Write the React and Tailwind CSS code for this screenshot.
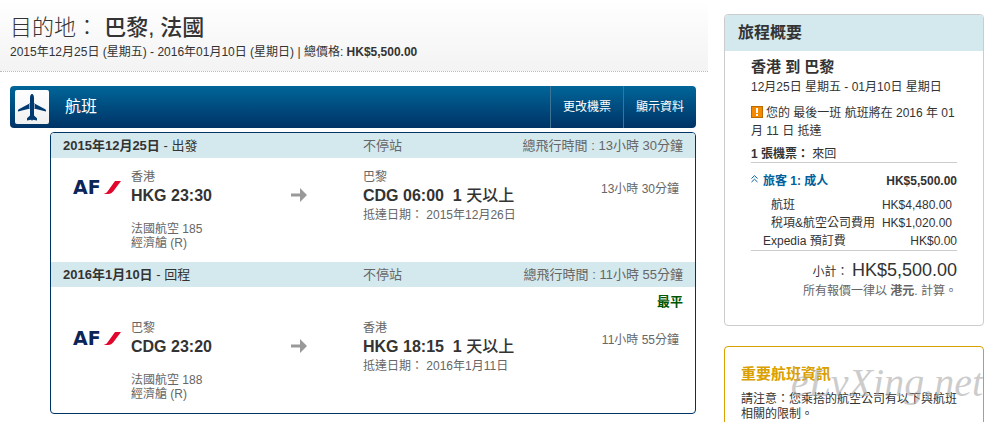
import { useState } from 'react'

const voos = [
    {
        data: '2015年12月25日',
        sentido: '出發',
        duracao: '13小時 30分鐘',
        origem: '香港',
        partida: 'HKG 23:30',
        destino: '巴黎',
        chegada: 'CDG 06:00',
        dataChegada: '2015年12月26日',
        voo: '法國航空 185',
        classe: '經濟艙 (R)',
        maisBarato: false
    },
    {
        data: '2016年1月10日',
        sentido: '回程',
        duracao: '11小時 55分鐘',
        origem: '巴黎',
        partida: 'CDG 23:20',
        destino: '香港',
        chegada: 'HKG 18:15',
        dataChegada: '2016年1月11日',
        voo: '法國航空 188',
        classe: '經濟艙 (R)',
        maisBarato: true
    }
]

function LogoAF() {
    return (
        <div className="flex w-12 h-[14px] items-center justify-between font-['DejaVu_Sans',sans-serif] text-[19px] leading-[14px] font-bold text-[#0b2559]">
            <span>AF</span>
            <svg viewBox="0 0 18 13" className="w-[18px] h-[13px]" aria-hidden="true">
                <path fill="#e2062c" d="M12 0 H18 L10.500 10 C9 12 7.500 13 5 13 H0.500 C2.500 12.600 3.500 11.800 4.500 10.500 Z" />
            </svg>
        </div>
    )
}

function Aviao() {
    return (
        <svg viewBox="0 0 34 34" className="w-[34px] h-[34px]" aria-hidden="true">
            <path
                fill="#003a70"
                d="M17 4 C18.300 4 19 5.800 19 8 V13.200 L30.200 19.200 C31 19.700 31.200 20.500 31 21.600 L19 18.500 V25.600 L22 28.200 V30.600 L17.800 29.800 L17 31 L16.200 29.800 L12 30.600 V28.200 L15 25.600 V18.500 L3 21.600 C2.800 20.500 3 19.700 3.800 19.200 L15 13.200 V8 C15 5.800 15.700 4 17 4 Z"
            />
            <path fill="none" stroke="#8fa9c4" d="M14.500 13.500 V18.500 M19.500 13.500 V18.500" />
        </svg>
    )
}

function Seta() {
    return (
        <svg viewBox="0 0 16 14" className="w-4 h-[14px]" aria-hidden="true">
            <path fill="#999999" d="M0 5.500 H9 V0 L16 7 L9 14 V8.500 H0 Z" />
        </svg>
    )
}

function Trecho({ voo }) {
    return (
        <section>
            <div className="grid grid-cols-[300px_1fr_auto] h-[25px] items-center px-3 bg-[#d4e9ed] text-[13px] text-[#666666]">
                <h3 className="text-[#333333]">
                    <b>{voo.data}</b> - {voo.sentido}
                </h3>
                <span>不停站</span>
                <span>總飛行時間 : {voo.duracao}</span>
            </div>

            {voo.maisBarato && (
                <p className="pt-[7px] px-3 text-right text-[13px] leading-[15px] font-bold text-[#005500]">最平</p>
            )}

            <div className="grid grid-cols-[58px_160px_72px_1fr_auto] pl-[22px] pr-4 py-3 text-xs leading-[14px] text-[#666666]">
                <div className="pt-2.5">
                    <LogoAF />
                </div>
                <div>
                    <p>{voo.origem}</p>
                    <p className="text-base leading-6 font-bold text-[#333333]">{voo.partida}</p>
                    <p className="mt-[14px]">{voo.voo}</p>
                    <p>{voo.classe}</p>
                </div>
                <div className="pt-[18px]">
                    <Seta />
                </div>
                <div>
                    <p>{voo.destino}</p>
                    <p className="text-base leading-6 font-bold text-[#333333]">
                        {voo.chegada}&nbsp; 1 <span className="font-medium">天以上</span>
                    </p>
                    <p>抵達日期： {voo.dataChegada}</p>
                </div>
                <p className="pt-3">{voo.duracao}</p>
            </div>
        </section>
    )
}

function Resumo() {
    const [aberto, setAberto] = useState(true)

    return (
        <section className="border border-[#cccccc] rounded-[4px] pb-[25px] overflow-hidden">
            <h2 className="h-9 px-[13px] bg-[#d4e9ed] text-base leading-9 font-bold">旅程概要</h2>

            <div className="px-[26px] pt-1.5 text-xs leading-[18px]">
                <h3 className="mb-px text-[15px] leading-5 font-bold">香港 到 巴黎</h3>
                <p>12月25日 星期五 - 01月10日 星期日</p>

                <p className="mt-2">
                    <svg viewBox="0 0 12 12" className="inline-block w-3 h-3 mr-[3px] align-[-1px]" aria-hidden="true">
                        <rect x="0.5" y="0.5" width="11" height="11" fill="#f58a00" stroke="#b96a00" />
                        <path fill="#ffffff" d="M5 2 H7 V7 H5 Z M5 8 H7 V10 H5 Z" />
                    </svg>
                    您的 最後一班 航班將在 2016 年 01 月 11 日 抵達
                </p>

                <p className="mt-1.5 border-b border-[#cccccc] leading-4">
                    <b>1 張機票：</b> 來回
                </p>

                {/* Valores por passageiro */}
                <div className="mt-[9px] flex justify-between font-bold">
                    <button
                        type="button"
                        aria-expanded={aberto}
                        onClick={() => setAberto(!aberto)}
                        className="flex gap-[5px] text-[#00609c] cursor-pointer"
                    >
                        <svg viewBox="0 0 7 8" className="w-[7px] h-2 mt-[3px]" fill="none" stroke="currentColor" aria-hidden="true">
                            <path d="M0.500 3.500 L3.500 0.700 L6.500 3.500 M0.500 7 L3.500 4.200 L6.500 7" />
                        </svg>
                        旅客 1: 成人
                    </button>
                    <span>HK$5,500.00</span>
                </div>

                <table className="w-full mt-1.5 border-b border-[#cccccc]">
                    <tbody>
                        {aberto && (
                            <>
                                <tr>
                                    <th scope="row" className="p-0 pl-5 text-left font-normal">航班</th>
                                    <td className="p-0 pr-[5px] text-right">HK$4,480.00</td>
                                </tr>
                                <tr>
                                    <th scope="row" className="p-0 pl-5 text-left font-normal whitespace-nowrap">稅項&amp;航空公司費用</th>
                                    <td className="p-0 pr-[5px] text-right">HK$1,020.00</td>
                                </tr>
                            </>
                        )}
                        <tr>
                            <th scope="row" className="p-0 pl-3 text-left font-normal">Expedia 預訂費</th>
                            <td className="p-0 text-right">HK$0.00</td>
                        </tr>
                    </tbody>
                </table>

                <p className="mt-[9px] text-right leading-5">
                    小計： <span className="text-lg leading-5">HK$5,500.00</span>
                </p>
                <p className="text-right text-[#666666]">
                    所有報價一律以 <b>港元</b>. 計算。
                </p>
            </div>
        </section>
    )
}

function App() {
    return (
        <div className="flex gap-4 pr-[9px] bg-white text-[#333333] font-['Liberation_Sans','Noto_Sans_CJK_TC',sans-serif]">
            <main className="flex-1">
                <header className="h-[72px] px-[10px] pt-[14px] border-b border-dotted border-[#bbbbbb] bg-gradient-to-b from-white to-[#f3f3f3]">
                    <h1 className="text-[22px] leading-7 font-medium">
                        <span className="font-light">目的地：</span> 巴黎, 法國
                    </h1>
                    <p className="text-xs leading-5">
                        2015年12月25日 (星期五) - 2016年01月10日 (星期日) | 總價格: <b>HK$5,500.00</b>
                    </p>
                </header>

                <div className="mt-[14px] ml-[10px] mr-3">
                    <div className="flex h-[42px] rounded-[4px] bg-gradient-to-b from-[#006699] to-[#003366] text-white overflow-hidden">
                        <div className="m-1 ml-[5px] w-[34px] h-[34px] rounded-[2px] bg-gradient-to-b from-white to-[#f0f0f0]">
                            <Aviao />
                        </div>
                        <h2 className="flex-1 pl-3 text-base leading-[42px]">航班</h2>
                        <button type="button" className="px-3 border-l border-[#3d7394] text-xs cursor-pointer">更改機票</button>
                        <button type="button" className="px-3 border-l border-[#3d7394] text-xs cursor-pointer">顯示資料</button>
                    </div>

                    <div className="mt-1 ml-10 border border-[#003366] rounded-[4px] overflow-hidden">
                        {voos.map((voo) => (
                            <Trecho key={voo.data} voo={voo} />
                        ))}
                    </div>
                </div>
            </main>

            <aside className="w-[260px] pt-[14px]">
                <Resumo />

                {/* Aviso com a marca do site por cima */}
                <section className="relative mt-5 px-4 pt-[17px] pb-4 border border-[#d9a000] rounded-[4px]">
                    <h2 className="text-[15px] leading-5 font-bold text-[#d9a000]">重要航班資訊</h2>
                    <p className="mt-2 text-xs leading-[15px]">請注意：您乘搭的航空公司有以下與航班相關的限制。</p>
                    <span className="absolute right-0 top-4 text-[40px] leading-10 italic text-[#aaaaaa]/60 font-['Liberation_Serif',serif] pointer-events-none">
                        eLvXing.net
                    </span>
                </section>
            </aside>
        </div>
    )
}

export default App
